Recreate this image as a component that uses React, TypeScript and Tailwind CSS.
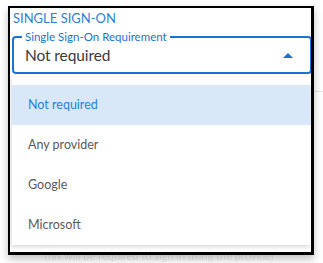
const options = ["Not required", "Any provider", "Google", "Microsoft"];

function CaretUp() {
  return (
    <svg width="10" height="5" viewBox="0 0 10 5" className="shrink-0">
      <path d="M0 5 L5 0 L10 5 Z" fill="#1a73d2" />
    </svg>
  );
}

export default function App() {
  const selected = "Not required";

  return (
    <div
      className="relative w-[323px] h-[263px] overflow-hidden bg-white"
      style={{ fontFamily: "Lato, 'Noto Sans', sans-serif" }}
    >
      {/* background page bits peeking out around the frame */}
      <div className="absolute left-[314px] right-0 top-[91px] h-px bg-[#e6e6e6]" />
      <div className="absolute left-[44px] top-[250px] text-[11px] leading-[12px] text-[#ececec] blur-[0.5px] whitespace-nowrap">
        this will be required to sign in using the provider
      </div>

      <div className="pt-[6px] pl-[8px]">
        <div className="relative w-[306px] h-[249px] overflow-hidden bg-white border-l-2 border-t-2 border-r-[3px] border-b-[3px] border-black shadow-[0_4px_8px_rgba(0,0,0,0.25)]">
          {/* Section heading */}
          <div className="pl-[3px] pt-[2px] h-[28px] text-[13px] leading-[16px] text-[#2d7fd9]">
            SINGLE SIGN-ON
          </div>

          {/* Outlined select */}
          <div className="relative ml-[2px] w-[300px] h-[38px] rounded-[4px] border-2 border-[#1a73d2] flex items-center pl-[11px] pr-[17px]">
            <span className="absolute -top-[8px] left-[8px] bg-white px-[3px] text-[11.5px] leading-[13px] text-[#1a73d2]">
              Single Sign-On Requirement
            </span>
            <span className="flex-1 pt-[1px] text-[15.5px] tracking-[-0.1px] text-[#3a3a3a]">{selected}</span>
            <CaretUp />
          </div>

          {/* Dropdown menu */}
          <div className="mt-[3px] ml-[2px] bg-white pt-[8px] shadow-[-1px_2px_4px_rgba(0,0,0,0.15)]">
            {options.map((opt) => (
              <div
                key={opt}
                className={
                  opt === selected
                    ? "h-[40px] flex items-center pl-[16px] bg-[#d8e8f9] text-[12.5px] text-[#2a7fe0]"
                    : "h-[40px] flex items-center pl-[16px] text-[12.5px] text-[#5a5a5a]"
                }
              >
                {opt}
              </div>
            ))}
          </div>
        </div>
      </div>
    </div>
  );
}
